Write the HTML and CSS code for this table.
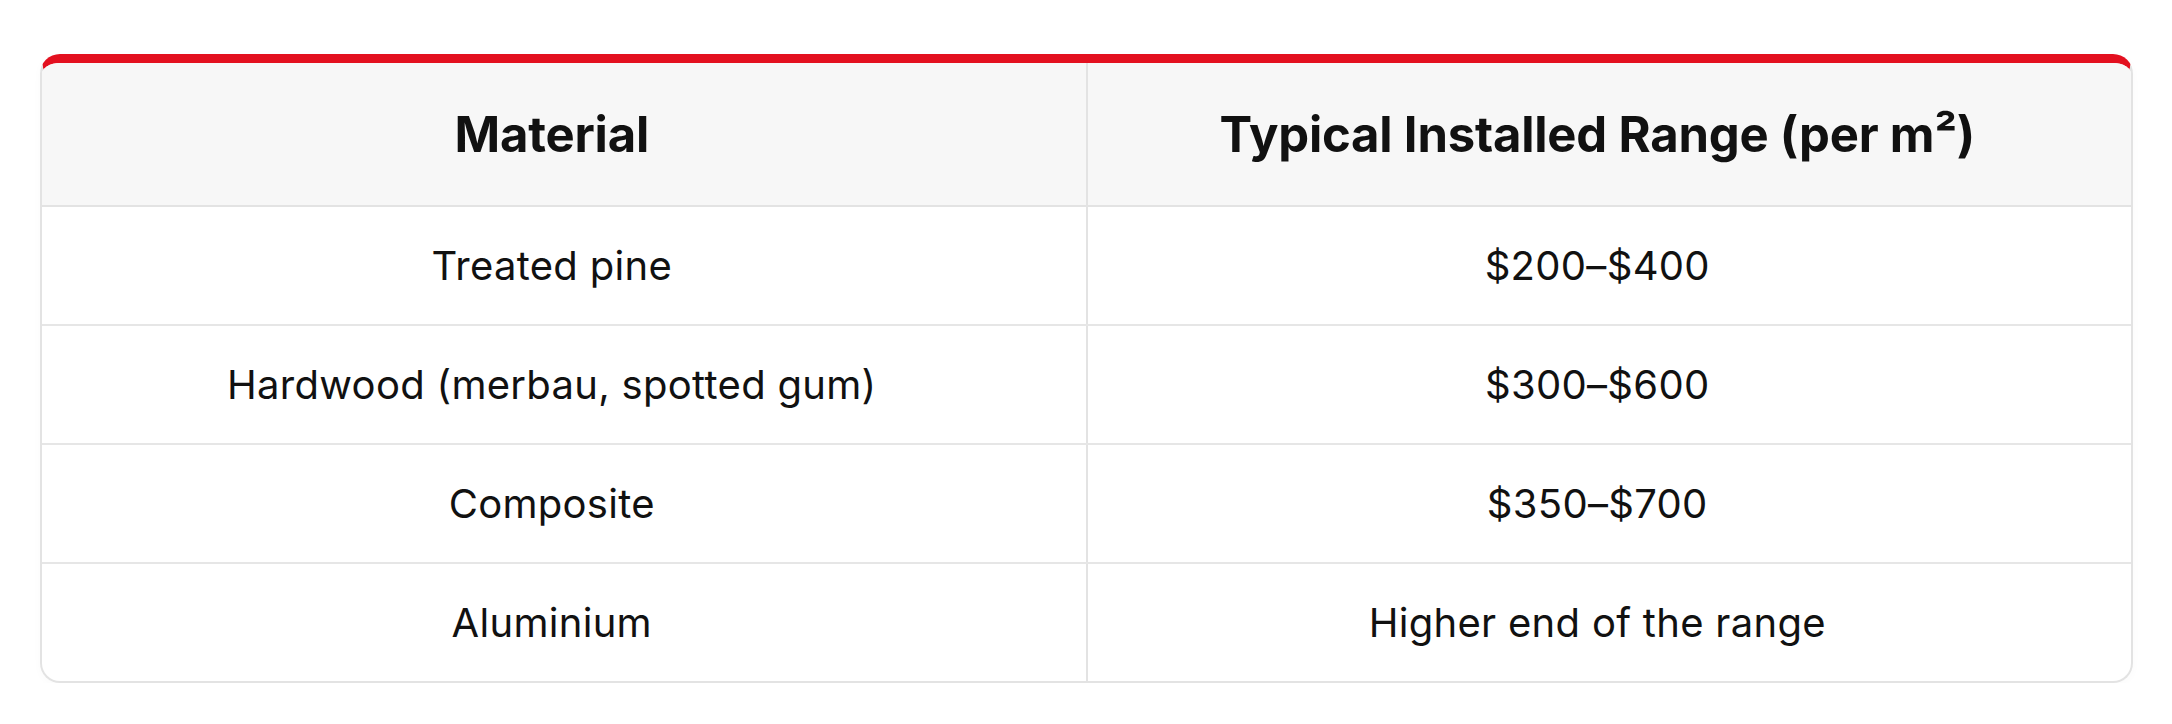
FILE: index.html
```
<!DOCTYPE html>
<html lang="en">
<head>
<meta charset="utf-8">
<title>Decking costs</title>
<link rel="stylesheet" href="styles.css">
</head>
<body>
<div class="page">
  <div class="card">
    <table class="cost-table">
      <thead>
        <tr>
          <th>Material</th>
          <th>Typical Installed Range (per m²)</th>
        </tr>
      </thead>
      <tbody>
        <tr><td>Treated pine</td><td>$200–$400</td></tr>
        <tr><td>Hardwood (merbau, spotted gum)</td><td>$300–$600</td></tr>
        <tr><td>Composite</td><td>$350–$700</td></tr>
        <tr><td>Aluminium</td><td>Higher end of the range</td></tr>
      </tbody>
    </table>
  </div>
</div>
</body>
</html>
```
FILE: styles.css
```
html, body {
  margin: 0;
  padding: 0;
  background: #ffffff;
}
.page {
  padding: 54px 39px 0 40px;
  font-family: Inter, "Noto Sans", sans-serif;
  color: #111111;
}
.card {
  border: 2px solid #e3e3e3;
  border-top: 9px solid #e3101f;
  border-radius: 20px;
  overflow: hidden;
  background: #ffffff;
  box-shadow: 0 2px 10px rgba(0,0,0,0.025);
}
.cost-table {
  width: 100%;
  border-collapse: collapse;
  table-layout: fixed;
}
.cost-table th,
.cost-table td {
  text-align: center;
  vertical-align: middle;
  padding: 0 44px 0 20px;
}
.cost-table th {
  background: #f7f7f7;
  font-size: 49px;
  font-weight: 700;
  height: 142px;
  border-bottom: 2px solid #e3e3e3;
  letter-spacing: -0.2px;
}
.cost-table td {
  font-size: 40px;
  font-weight: 400;
  letter-spacing: 0.3px;
  height: 117px;
  border-bottom: 2px solid #e6e6e6;
}
.cost-table tbody tr:last-child td {
  border-bottom: none;
}
.cost-table th:first-child,
.cost-table td:first-child {
  border-right: 2px solid #e3e3e3;
}
```
